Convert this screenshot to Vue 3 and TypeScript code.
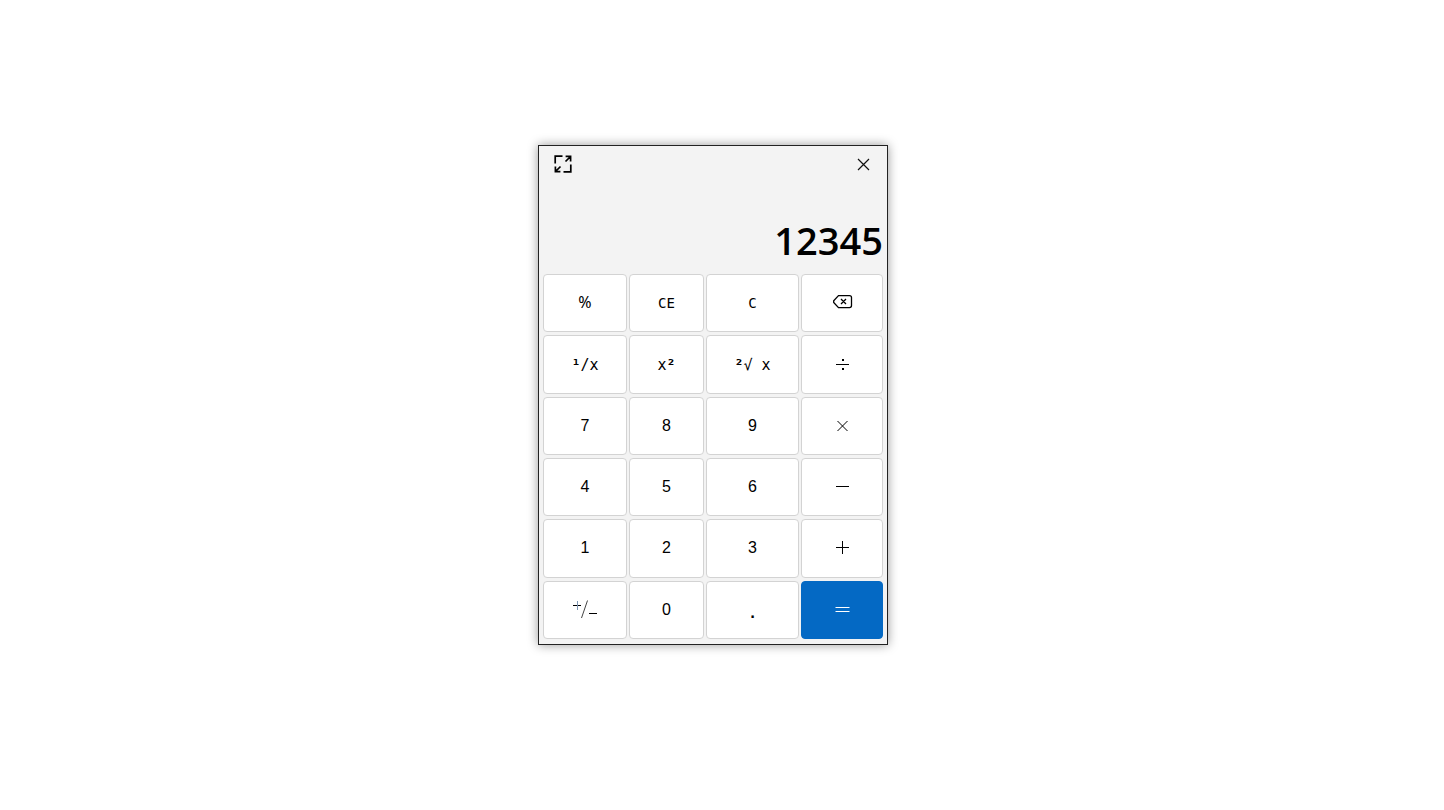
<script setup lang="ts">
import { ref } from 'vue'

interface Key {
  id: string
  label: string
  text?: string
  before?: string
  after?: string
  kind: 'digit' | 'func' | 'math' | 'percent' | 'dot' | 'icon' | 'equals'
  path?: string
}

const display = ref('12345')

const keys: Key[] = [
  { id: 'percent', label: 'Percent', text: '%', kind: 'percent' },
  { id: 'ce', label: 'Clear entry', text: 'CE', kind: 'func' },
  { id: 'c', label: 'Clear', text: 'C', kind: 'func' },
  { id: 'back', label: 'Backspace', kind: 'icon' },
  { id: 'inv', label: 'Reciprocal', before: '¹', text: '/x', kind: 'math' },
  { id: 'sq', label: 'Square', text: 'x', after: '²', kind: 'math' },
  { id: 'sqrt', label: 'Square root', before: '²', text: '√ x', kind: 'math' },
  { id: 'div', label: 'Divide', kind: 'icon', path: 'M6 12.5h13M12 7.5h2M12 8.5h2M12 16.5h2M12 17.5h2' },
  { id: '7', label: '7', text: '7', kind: 'digit' },
  { id: '8', label: '8', text: '8', kind: 'digit' },
  { id: '9', label: '9', text: '9', kind: 'digit' },
  { id: 'mul', label: 'Multiply', kind: 'icon', path: 'M7.5 7l10 10M17.5 7l-10 10' },
  { id: '4', label: '4', text: '4', kind: 'digit' },
  { id: '5', label: '5', text: '5', kind: 'digit' },
  { id: '6', label: '6', text: '6', kind: 'digit' },
  { id: 'sub', label: 'Subtract', kind: 'icon', path: 'M6 11.5h13' },
  { id: '1', label: '1', text: '1', kind: 'digit' },
  { id: '2', label: '2', text: '2', kind: 'digit' },
  { id: '3', label: '3', text: '3', kind: 'digit' },
  { id: 'add', label: 'Add', kind: 'icon', path: 'M6 11.5h13M12.5 5v13' },
  { id: 'sign', label: 'Change sign', kind: 'icon' },
  { id: '0', label: '0', text: '0', kind: 'digit' },
  { id: 'dot', label: 'Decimal point', text: '.', kind: 'dot' },
  { id: 'eq', label: 'Equals', kind: 'equals', path: 'M5.5 9.5h14M5.5 13.5h14' },
]

function press(key: Key) {
  if (key.kind === 'digit') display.value = display.value === '0' ? key.label : display.value + key.label
  else if (key.kind === 'dot' && !display.value.includes('.')) display.value += '.'
  else if (key.id === 'c' || key.id === 'ce') display.value = '0'
  else if (key.id === 'back') display.value = display.value.slice(0, -1) || '0'
}
</script>

<template>
  <main class="page">
    <section class="calculator" aria-label="Calculator">
      <header class="bar">
        <button class="tool" type="button" aria-label="Expand">
          <svg width="20" height="20" viewBox="0 0 20 20" fill="none" stroke="#000" stroke-width="1.7">
            <path d="M9.5 2.2H2.2v7.3M10.5 17.8h7.3v-7.3M12.5 7.5l5-5M12.6 2.4h5v5M7.5 12.5l-5 5M2.4 12.6v5h5" />
          </svg>
        </button>
        <button class="tool" type="button" aria-label="Close">
          <svg width="20" height="20" viewBox="0 0 20 20" fill="none" stroke="#111" stroke-width="1.2">
            <path d="M5 5l11 11M16 5l-11 11" />
          </svg>
        </button>
      </header>
      <output class="display">{{ display }}</output>
      <div class="keys">
        <button
          v-for="key in keys"
          :key="key.id"
          type="button"
          class="key"
          :class="key.kind"
          :aria-label="key.label"
          @click="press(key)"
        >
          <svg v-if="key.id === 'back'" width="24" height="24" viewBox="0 0 24 24" fill="none" stroke="#000" stroke-width="1.3">
            <path d="M8.5 4.6h11a2 2 0 0 1 2 2v8a2 2 0 0 1-2 2h-11L3.7 11.4v-1.6zM11 8l5 5M16 8l-5 5" />
          </svg>
          <svg v-else-if="key.id === 'sign'" width="24" height="24" viewBox="0 0 24 24" fill="none" stroke="#000">
            <path d="M0 7.5h8M16 15.5h8" />
            <path d="M4.5 3v9" stroke="#7d97b5" />
            <path d="M14.5 2.5L8.5 20" stroke="#444" />
          </svg>
          <svg v-else-if="key.path" width="24" height="24" viewBox="0 0 24 24" fill="none" stroke="currentColor">
            <path :d="key.path" />
          </svg>
          <span v-else><b v-if="key.before">{{ key.before }}</b>{{ key.text }}<b v-if="key.after">{{ key.after }}</b></span>
        </button>
      </div>
    </section>
  </main>
</template>

<style>
body {
  margin: 0;
  background: #fff;
}
</style>

<style scoped>
.page {
  box-sizing: border-box;
  min-height: 100vh;
  padding: 0 18px 20px 0;
  display: flex;
  align-items: center;
  justify-content: center;
}

.calculator {
  box-sizing: border-box;
  width: 100%;
  max-width: 350px;
  padding: 0 4px 5px;
  border: 1px solid #222;
  background: #f3f3f3;
  box-shadow: 0 0 10px rgba(0, 0, 0, 0.4);
  font-family: "Liberation Sans", Arial, sans-serif;
}

.bar {
  display: flex;
  justify-content: space-between;
  padding: 8px 10px;
}

.tool {
  display: flex;
  padding: 0;
  border: 0;
  background: none;
}

.display {
  display: block;
  height: 92px;
  text-align: right;
  font: 600 38px/116px "Open Sans", "Noto Sans", sans-serif;
  color: #000;
}

.keys {
  display: grid;
  grid-template-columns: 84fr 75fr 93fr 82fr;
  grid-auto-rows: 1fr;
  gap: 3px 2px;
  height: 365px;
}

.key {
  display: flex;
  align-items: center;
  justify-content: center;
  min-width: 0;
  padding: 0;
  border: 1px solid #d3d3d3;
  border-radius: 4px;
  background: #fff;
  color: #000;
  font: 16px "Liberation Sans", Arial, sans-serif;
}

.key span {
  white-space: pre;
}

.percent {
  padding-bottom: 2px;
  font-family: "Noto Sans", sans-serif;
}

.func {
  font: 14px "DejaVu Sans Mono", monospace;
}

.math {
  padding-top: 2px;
  font: 15px "DejaVu Sans Mono", monospace;
}

.dot {
  font: 24px "Liberation Sans", Arial, sans-serif;
}

.equals {
  background: #0469c4;
  border-color: #0469c4;
  color: #fff;
}
</style>
